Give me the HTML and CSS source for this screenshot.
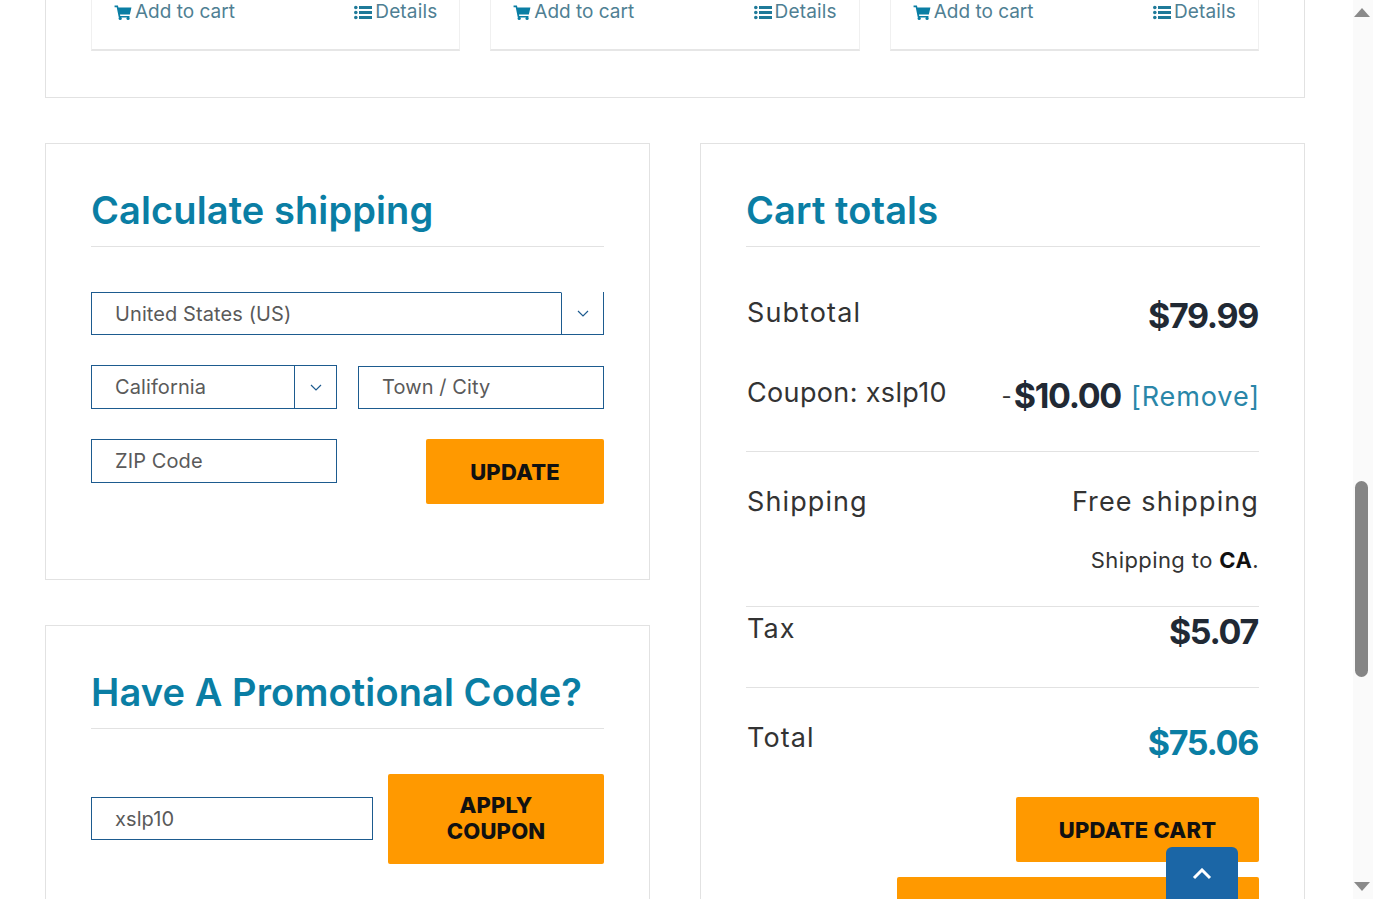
FILE: index.html
```html
<!DOCTYPE html>
<html lang="en">
<head>
  <meta charset="UTF-8" />
  <title>Cart</title>
  <link rel="stylesheet" href="styles.css">
</head>
<body>
  <div class="page">
    <div class="related panel">
      <div class="product">
        <a class="cart-link"><svg class="icon" viewBox="0 0 18 16"><path d="M0 .6h3.6l.5 2H18l-1.7 7.6H5.8l.3 1.5h9.8v1.6H4.5L2.3 2.3H0z"/><circle cx="6" cy="14.3" r="1.7"/><circle cx="14.4" cy="14.3" r="1.7"/></svg>Add to cart</a>
        <a class="details-link"><svg class="icon" viewBox="0 0 18 14"><circle cx="1.8" cy="2" r="1.8"/><circle cx="1.8" cy="7" r="1.8"/><circle cx="1.8" cy="12" r="1.8"/><path d="M5 .5h13v3H5zM5 5.5h13v3H5zM5 10.5h13v3H5z"/></svg>Details</a>
      </div>
      <div class="product">
        <a class="cart-link"><svg class="icon" viewBox="0 0 18 16"><path d="M0 .6h3.6l.5 2H18l-1.7 7.6H5.8l.3 1.5h9.8v1.6H4.5L2.3 2.3H0z"/><circle cx="6" cy="14.3" r="1.7"/><circle cx="14.4" cy="14.3" r="1.7"/></svg>Add to cart</a>
        <a class="details-link"><svg class="icon" viewBox="0 0 18 14"><circle cx="1.8" cy="2" r="1.8"/><circle cx="1.8" cy="7" r="1.8"/><circle cx="1.8" cy="12" r="1.8"/><path d="M5 .5h13v3H5zM5 5.5h13v3H5zM5 10.5h13v3H5z"/></svg>Details</a>
      </div>
      <div class="product">
        <a class="cart-link"><svg class="icon" viewBox="0 0 18 16"><path d="M0 .6h3.6l.5 2H18l-1.7 7.6H5.8l.3 1.5h9.8v1.6H4.5L2.3 2.3H0z"/><circle cx="6" cy="14.3" r="1.7"/><circle cx="14.4" cy="14.3" r="1.7"/></svg>Add to cart</a>
        <a class="details-link"><svg class="icon" viewBox="0 0 18 14"><circle cx="1.8" cy="2" r="1.8"/><circle cx="1.8" cy="7" r="1.8"/><circle cx="1.8" cy="12" r="1.8"/><path d="M5 .5h13v3H5zM5 5.5h13v3H5zM5 10.5h13v3H5z"/></svg>Details</a>
      </div>
    </div>

    <div class="columns">
      <div class="left-col">
        <section class="panel shipping">
          <h2>Calculate shipping</h2>
          <div class="field select-field wide">
            <span class="value">United States (US)</span>
            <span class="arrow"><svg viewBox="0 0 12 7"><path d="M1 1l5 5 5-5"/></svg></span>
          </div>
          <div class="form-row">
            <div class="field select-field">
              <span class="value">California</span>
              <span class="arrow"><svg viewBox="0 0 12 7"><path d="M1 1l5 5 5-5"/></svg></span>
            </div>
            <div class="field city-field"><span class="value">Town / City</span></div>
          </div>
          <div class="form-row zip-row">
            <div class="field"><span class="value">ZIP Code</span></div>
            <a class="btn update-btn">UPDATE</a>
          </div>
        </section>

        <section class="panel promo">
          <h2>Have A Promotional Code?</h2>
          <div class="promo-row">
            <div class="field coupon-field"><span class="value">xslp10</span></div>
            <a class="btn coupon-btn">APPLY<br>COUPON</a>
          </div>
        </section>
      </div>

      <section class="panel totals">
        <h2>Cart totals</h2>
        <div class="total-row subtotal-row"><span>Subtotal</span><strong>$79.99</strong></div>
        <div class="total-row coupon-row"><span class="coupon-label">Coupon: xslp10</span><span class="discount"><i>-</i><strong>$10.00</strong><a>[Remove]</a></span></div>
        <div class="total-row shipping-row"><span>Shipping</span><span>Free shipping</span></div>
        <p class="ship-to">Shipping to <b>CA</b>.</p>
        <div class="total-row tax-row"><span>Tax</span><strong>$5.07</strong></div>
        <div class="total-row grand-row"><span>Total</span><strong>$75.06</strong></div>
        <div class="cart-actions">
          <a class="btn update-cart">UPDATE CART</a>
          <a class="btn checkout"></a>
        </div>
      </section>
    </div>
  </div>

  <a class="to-top"><svg viewBox="0 0 20 12"><path d="M2 10l8-8 8 8"/></svg></a>

  <div class="scrollbar">
    <span class="up"></span>
    <span class="thumb"></span>
    <span class="down"></span>
  </div>
</body>
</html>
```

FILE: styles.css
```css
* {
  box-sizing: border-box;
}
html, body {
  margin: 0;
  height: 899px;
  overflow: hidden;
}
body {
  background: #fff;
  color: #212934;
  font-family: Inter, "Open Sans", sans-serif;
  position: relative;
}
.page {
  width: 1353px;
  height: 899px;
  padding: 0 48px 0 45px;
  overflow: hidden;
}
.panel {
  background: #fff;
  border: 1px solid #e2e2e2;
  padding: 0 45px;
}

/* related products, cut off by the scroll position */
.related {
  height: 98px;
  border-top: none;
  display: grid;
  grid-template-columns: repeat(3, 1fr);
  gap: 30px;
  align-items: start;
}
.product {
  height: 51px;
  border: 1px solid #f0f0f0;
  border-top: none;
  border-bottom: 2px solid #e6e6e6;
  padding: 0 22px;
  display: flex;
  justify-content: space-between;
  font-size: 19px;
  line-height: 24px;
}
.cart-link, .details-link {
  color: #4f7f93;
  display: flex;
  align-items: center;
  gap: 3px;
  height: 24px;
}
.details-link {
  letter-spacing: .15px;
}
.icon {
  width: 18px;
  height: 15px;
  fill: #0a7ea4;
}
.details-link .icon {
  fill: #1f7a99;
}

.columns {
  display: grid;
  grid-template-columns: 605px 605px;
  gap: 50px;
  margin-top: 45px;
}
h2 {
  margin: 0;
  height: 103px;
  padding-top: 44px;
  border-bottom: 1px solid #e2e2e2;
  color: #0a7ea4;
  font-size: 38px;
  line-height: 44px;
  font-weight: 600;
  letter-spacing: .1px;
  white-space: nowrap;
}

/* form fields */
.shipping {
  height: 437px;
}
.field {
  height: 44px;
  border: 1px solid #1d5b8f;
  display: flex;
  align-items: center;
  justify-content: space-between;
  color: #5a5a5a;
  font-size: 20px;
  letter-spacing: .1px;
}
.value {
  padding-left: 23px;
}
.wide {
  margin-top: 45px;
  height: 43px;
}
.arrow {
  width: 42px;
  height: 100%;
  border-left: 1px solid #1d5b8f;
  display: flex;
  align-items: center;
  justify-content: center;
}
/* the country select has no top border over its arrow */
.wide .arrow {
  align-self: flex-start;
  height: calc(100% + 1px);
  margin-top: -1px;
  border-top: 1px solid #fff;
}
.arrow svg {
  width: 12px;
  height: 7px;
  fill: none;
  stroke: #1d5b8f;
  stroke-width: 1.2;
}
.form-row {
  display: grid;
  grid-template-columns: 246px 246px;
  gap: 21px;
  margin-top: 30px;
  align-items: start;
}
.city-field {
  margin-top: 1px;
  height: 43px;
  padding-bottom: 2px;
}
.zip-row {
  display: flex;
  justify-content: space-between;
}
.zip-row .field {
  width: 246px;
}

.btn {
  background: #ff9900;
  color: #111;
  font-weight: 800;
  font-size: 22px;
  line-height: 26px;
  letter-spacing: .2px;
  border-radius: 2px;
  display: flex;
  align-items: center;
  justify-content: center;
  text-align: center;
}
.update-btn {
  width: 178px;
  height: 65px;
}

.promo {
  margin-top: 45px;
  height: 300px;
}
.promo-row {
  display: flex;
  justify-content: space-between;
  align-items: flex-start;
  margin-top: 45px;
}
.coupon-field {
  width: 282px;
  height: 43px;
  margin-top: 23px;
}
.coupon-btn {
  width: 216px;
  height: 90px;
  padding-bottom: 2px;
}

/* totals */
.totals {
  height: 800px;
}
.totals h2 {
  margin-right: -1px;
}
.total-row {
  display: flex;
  justify-content: space-between;
  align-items: flex-start;
  padding: 0 1px;
  font-size: 27px;
  line-height: 42px;
  letter-spacing: 1.1px;
  color: #333;
}
.total-row strong {
  font-size: 34px;
  line-height: 48px;
  font-weight: 700;
  letter-spacing: -1.3px;
  color: #212934;
}
.subtotal-row {
  margin-top: 45px;
  height: 80px;
}
.coupon-row {
  height: 80px;
  border-bottom: 1px solid #e2e2e2;
}
.coupon-label {
  letter-spacing: .35px;
}
.discount {
  display: flex;
  align-items: flex-start;
  line-height: 48px;
}
.discount i {
  font-style: normal;
  font-size: 22px;
  letter-spacing: 0;
  margin-right: 2px;
}
.discount a {
  color: #2a86a8;
  margin-left: 10px;
  margin-right: -2px;
  letter-spacing: .9px;
  line-height: 50px;
}
.shipping-row {
  margin-top: 29px;
  height: 42px;
  padding-right: 0;
}
.ship-to {
  margin: 0;
  padding-top: 21px;
  height: 84px;
  border-bottom: 1px solid #e2e2e2;
  text-align: right;
  font-size: 22px;
  line-height: 32px;
  letter-spacing: .4px;
  color: #333;
}
.ship-to b {
  color: #111;
}
.tax-row {
  height: 81px;
  padding-top: 1px;
  border-bottom: 1px solid #e2e2e2;
}
.grand-row {
  height: 50px;
  margin-top: 29px;
}
.grand-row strong {
  color: #0a7ea4;
  line-height: 52px;
}
.cart-actions {
  display: flex;
  flex-direction: column;
  align-items: flex-end;
  gap: 15px;
  margin-top: 30px;
}
.update-cart {
  width: 243px;
  height: 65px;
}
.checkout {
  width: 362px;
  height: 65px;
}

/* floating bits */
.to-top {
  position: absolute;
  left: 1166px;
  top: 847px;
  width: 72px;
  height: 52px;
  background: #1b66a6;
  border-radius: 6px 6px 0 0;
  display: flex;
  justify-content: center;
  padding-top: 21px;
}
.to-top svg {
  width: 20px;
  height: 12px;
  fill: none;
  stroke: #fff;
  stroke-width: 3;
}
.scrollbar {
  position: absolute;
  left: 1353px;
  top: 0;
  width: 20px;
  height: 899px;
  background: #fafafa;
}
.thumb {
  position: absolute;
  left: 2px;
  top: 481px;
  width: 13px;
  height: 196px;
  border-radius: 7px;
  background: #858585;
}
.up, .down {
  position: absolute;
  left: 1px;
  width: 0;
  height: 0;
  border-left: 8px solid transparent;
  border-right: 8px solid transparent;
}
.up {
  top: 8px;
  border-bottom: 9px solid #8a8a8a;
}
.down {
  bottom: 8px;
  border-top: 9px solid #8a8a8a;
}
```
